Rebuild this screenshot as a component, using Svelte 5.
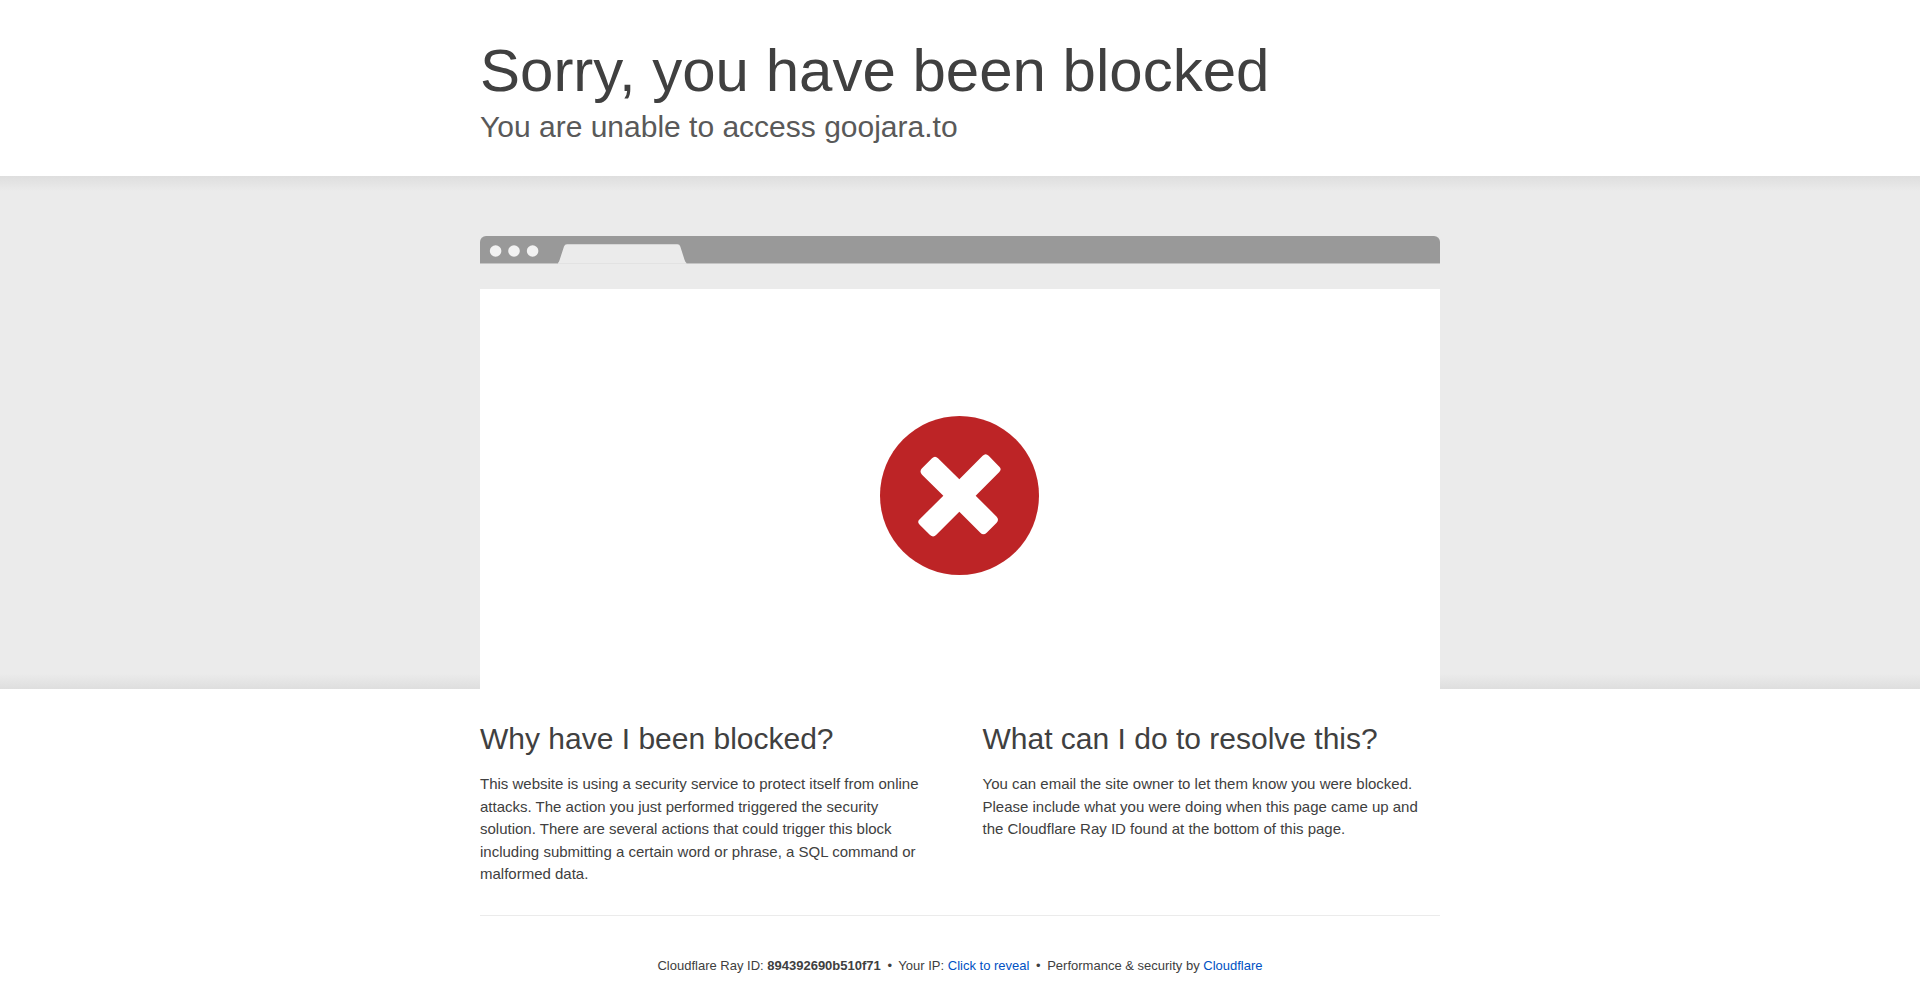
<script>
	let { host = 'goojara.to', rayId = '894392690b510f71', ip = '203.0.113.24' } = $props();

	let revealed = $state(false);

	const sections = [
		{
			title: 'Why have I been blocked?',
			text: 'This website is using a security service to protect itself from online attacks. The action you just performed triggered the security solution. There are several actions that could trigger this block including submitting a certain word or phrase, a SQL command or malformed data.'
		},
		{
			title: 'What can I do to resolve this?',
			text: 'You can email the site owner to let them know you were blocked. Please include what you were doing when this page came up and the Cloudflare Ray ID found at the bottom of this page.'
		}
	];
</script>

<div class="page">
	<header class="wrapper header">
		<h1>Sorry, you have been blocked</h1>
		<h2 class="subheadline">You are unable to access {host}</h2>
	</header>

	<main>
		<div class="highlight">
			<div class="wrapper">
				<div class="browser-bar">
					<svg width="210" height="28" viewBox="0 0 210 28" aria-hidden="true">
						<g fill="#f2f2f2">
							<circle cx="15.6" cy="15" r="5.8" />
							<circle cx="34" cy="15" r="5.8" />
							<circle cx="52.6" cy="15" r="5.8" />
						</g>
						<path
							fill="#ebebeb"
							d="M78 27 Q79 26 79.6 24 L84 10.5 Q84.8 8.3 87 8.3 H197.5 Q199.6 8.3 200.3 10.5 L204.6 24 Q205.2 26 206.5 27 Z"
						/>
						<path fill="#e2e2e2" d="M78 27 H206.5 V28 H78 Z" />
					</svg>
				</div>
				<div class="screenshot">
					<svg class="icon-error" viewBox="0 0 480 477" role="img" aria-label="Blocked">
						<circle cx="238.5" cy="238.5" r="238.5" fill="#bd2426" />
						<path
							fill="#fff"
							d="M238 190 L308 119 Q317 110 326 119 L358 152 Q366 160 358 168 L287 239 L350 302 Q358 311 350 320 L320 350 Q310 360 301 350 L238 287 L169 356 Q160 366 150 357 L119 326 Q110 318 119 310 L190 239 L126 176 Q117 166 126 157 L156 127 Q165 117 174 127 Z"
						/>
					</svg>
				</div>
			</div>
		</div>

		<div class="wrapper columns">
			{#each sections as section (section.title)}
				<section>
					<h2>{section.title}</h2>
					<p>{section.text}</p>
				</section>
			{/each}
		</div>
	</main>

	<footer class="wrapper footer">
		<span>Cloudflare Ray ID: <strong>{rayId}</strong></span>
		<span class="separator">&bull;</span>
		<span>
			Your IP:
			{#if revealed}
				{ip}
			{:else}
				<button type="button" onclick={() => (revealed = true)}>Click to reveal</button>
			{/if}
		</span>
		<span class="separator">&bull;</span>
		<span>Performance &amp; security by <a href="https://www.cloudflare.com/5xx-error-landing">Cloudflare</a></span>
	</footer>
</div>

<style>
	:global(body) {
		margin: 0;
		background: #fff;
	}

	.page {
		font-family: 'Liberation Sans', Arial, sans-serif;
		font-size: 15px;
		line-height: 1.5;
		color: #404040;
	}

	.wrapper {
		box-sizing: border-box;
		max-width: 960px;
		margin: 0 auto;
	}

	h1,
	h2,
	p {
		margin: 0;
	}

	h1 {
		font-size: 60px;
		font-weight: 400;
		line-height: 72px;
	}

	h2 {
		font-size: 30px;
		font-weight: 400;
		line-height: 39px;
	}

	.header {
		padding: 35px 0 30px;
	}

	.subheadline {
		color: #595959;
	}

	.highlight {
		padding-top: 60px;
		background: linear-gradient(#dedede, #ebebeb 3%, #ebebeb 97%, #dedede);
	}

	.browser-bar {
		height: 28px;
		margin-bottom: 25px;
		overflow: hidden;
		background: linear-gradient(#999 27px, #c4c4c4 27px);
		border-radius: 6px 6px 0 0;
	}

	.browser-bar svg {
		display: block;
	}

	.screenshot {
		display: flex;
		justify-content: center;
		padding: 127px 0 114px;
		background: #fff;
	}

	.icon-error {
		width: 160px;
		height: 159px;
	}

	.columns {
		display: grid;
		grid-template-columns: 1fr 1fr;
		gap: 45px;
		padding: 30px 0 29px;
		border-bottom: 1px solid #ebebeb;
	}

	.columns p {
		margin-top: 15px;
	}

	.footer {
		padding: 40px 0 16px;
		font-size: 13px;
		text-align: center;
	}

	.separator {
		margin: 0 3px;
	}

	.footer button {
		padding: 0;
		border: 0;
		background: none;
		font: inherit;
		color: #0051c3;
		cursor: pointer;
	}

	.footer a {
		color: #0051c3;
		text-decoration: none;
	}

	.footer a:hover,
	.footer button:hover {
		color: #ee730a;
	}

	@media (max-width: 960px) {
		.header,
		.columns {
			padding-left: 20px;
			padding-right: 20px;
		}
	}

	@media (max-width: 720px) {
		h1 {
			font-size: 36px;
			line-height: 44px;
		}

		.columns {
			grid-template-columns: 1fr;
		}
	}
</style>
